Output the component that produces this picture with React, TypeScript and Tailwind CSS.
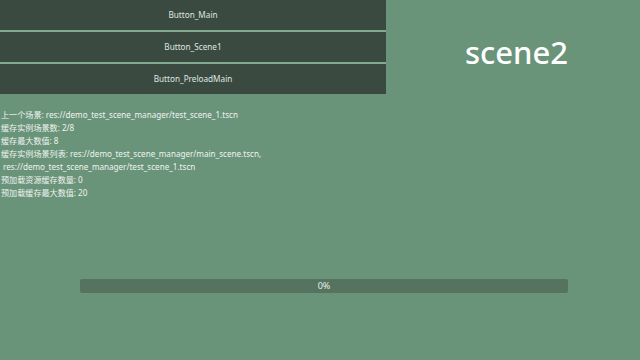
const font = { fontFamily: '"Noto Sans", "Noto Sans CJK SC", sans-serif' }

const buttons = ['Button_Main', 'Button_Scene1', 'Button_PreloadMain']

const lines = [
  '上一个场景: res://demo_test_scene_manager/test_scene_1.tscn',
  '缓存实例场景数: 2/8',
  '缓存最大数值: 8',
  '缓存实例场景列表: res://demo_test_scene_manager/main_scene.tscn,',
  ' res://demo_test_scene_manager/test_scene_1.tscn',
  '预加载资源缓存数量: 0',
  '预加载缓存最大数值: 20',
]

export default function App() {
  return (
    <div className="w-[640px] h-[360px] bg-[#6a947a] flex flex-col overflow-hidden" style={font}>
      <div className="flex">
        <div className="w-[386px] flex flex-col gap-[2px] bg-[#82aa8f]">
          {buttons.map((b) => (
            <div
              key={b}
              className="h-[30px] bg-[#3b4a40] flex items-center justify-center text-[8.2px] text-[#dfe6e0]"
            >
              {b}
            </div>
          ))}
        </div>
        <div className="flex-1 flex justify-end pr-[72px] pt-[37px]">
          <span className="text-[31px] leading-none text-white font-medium">scene2</span>
        </div>
      </div>
      <div className="mt-[14px] pl-[1px] flex flex-col text-[8.1px] leading-[13px] text-[#eef3ef] whitespace-pre">
        {lines.map((l, i) => (
          <div key={i}>{l}</div>
        ))}
      </div>
      <div className="flex-1" />
      <div className="ml-[80px] w-[488px] mb-[67px] h-[14px] rounded-[2px] bg-[#56735f] flex items-center justify-center text-[9px] text-[#e6ede7]">
        0%
      </div>
    </div>
  )
}
